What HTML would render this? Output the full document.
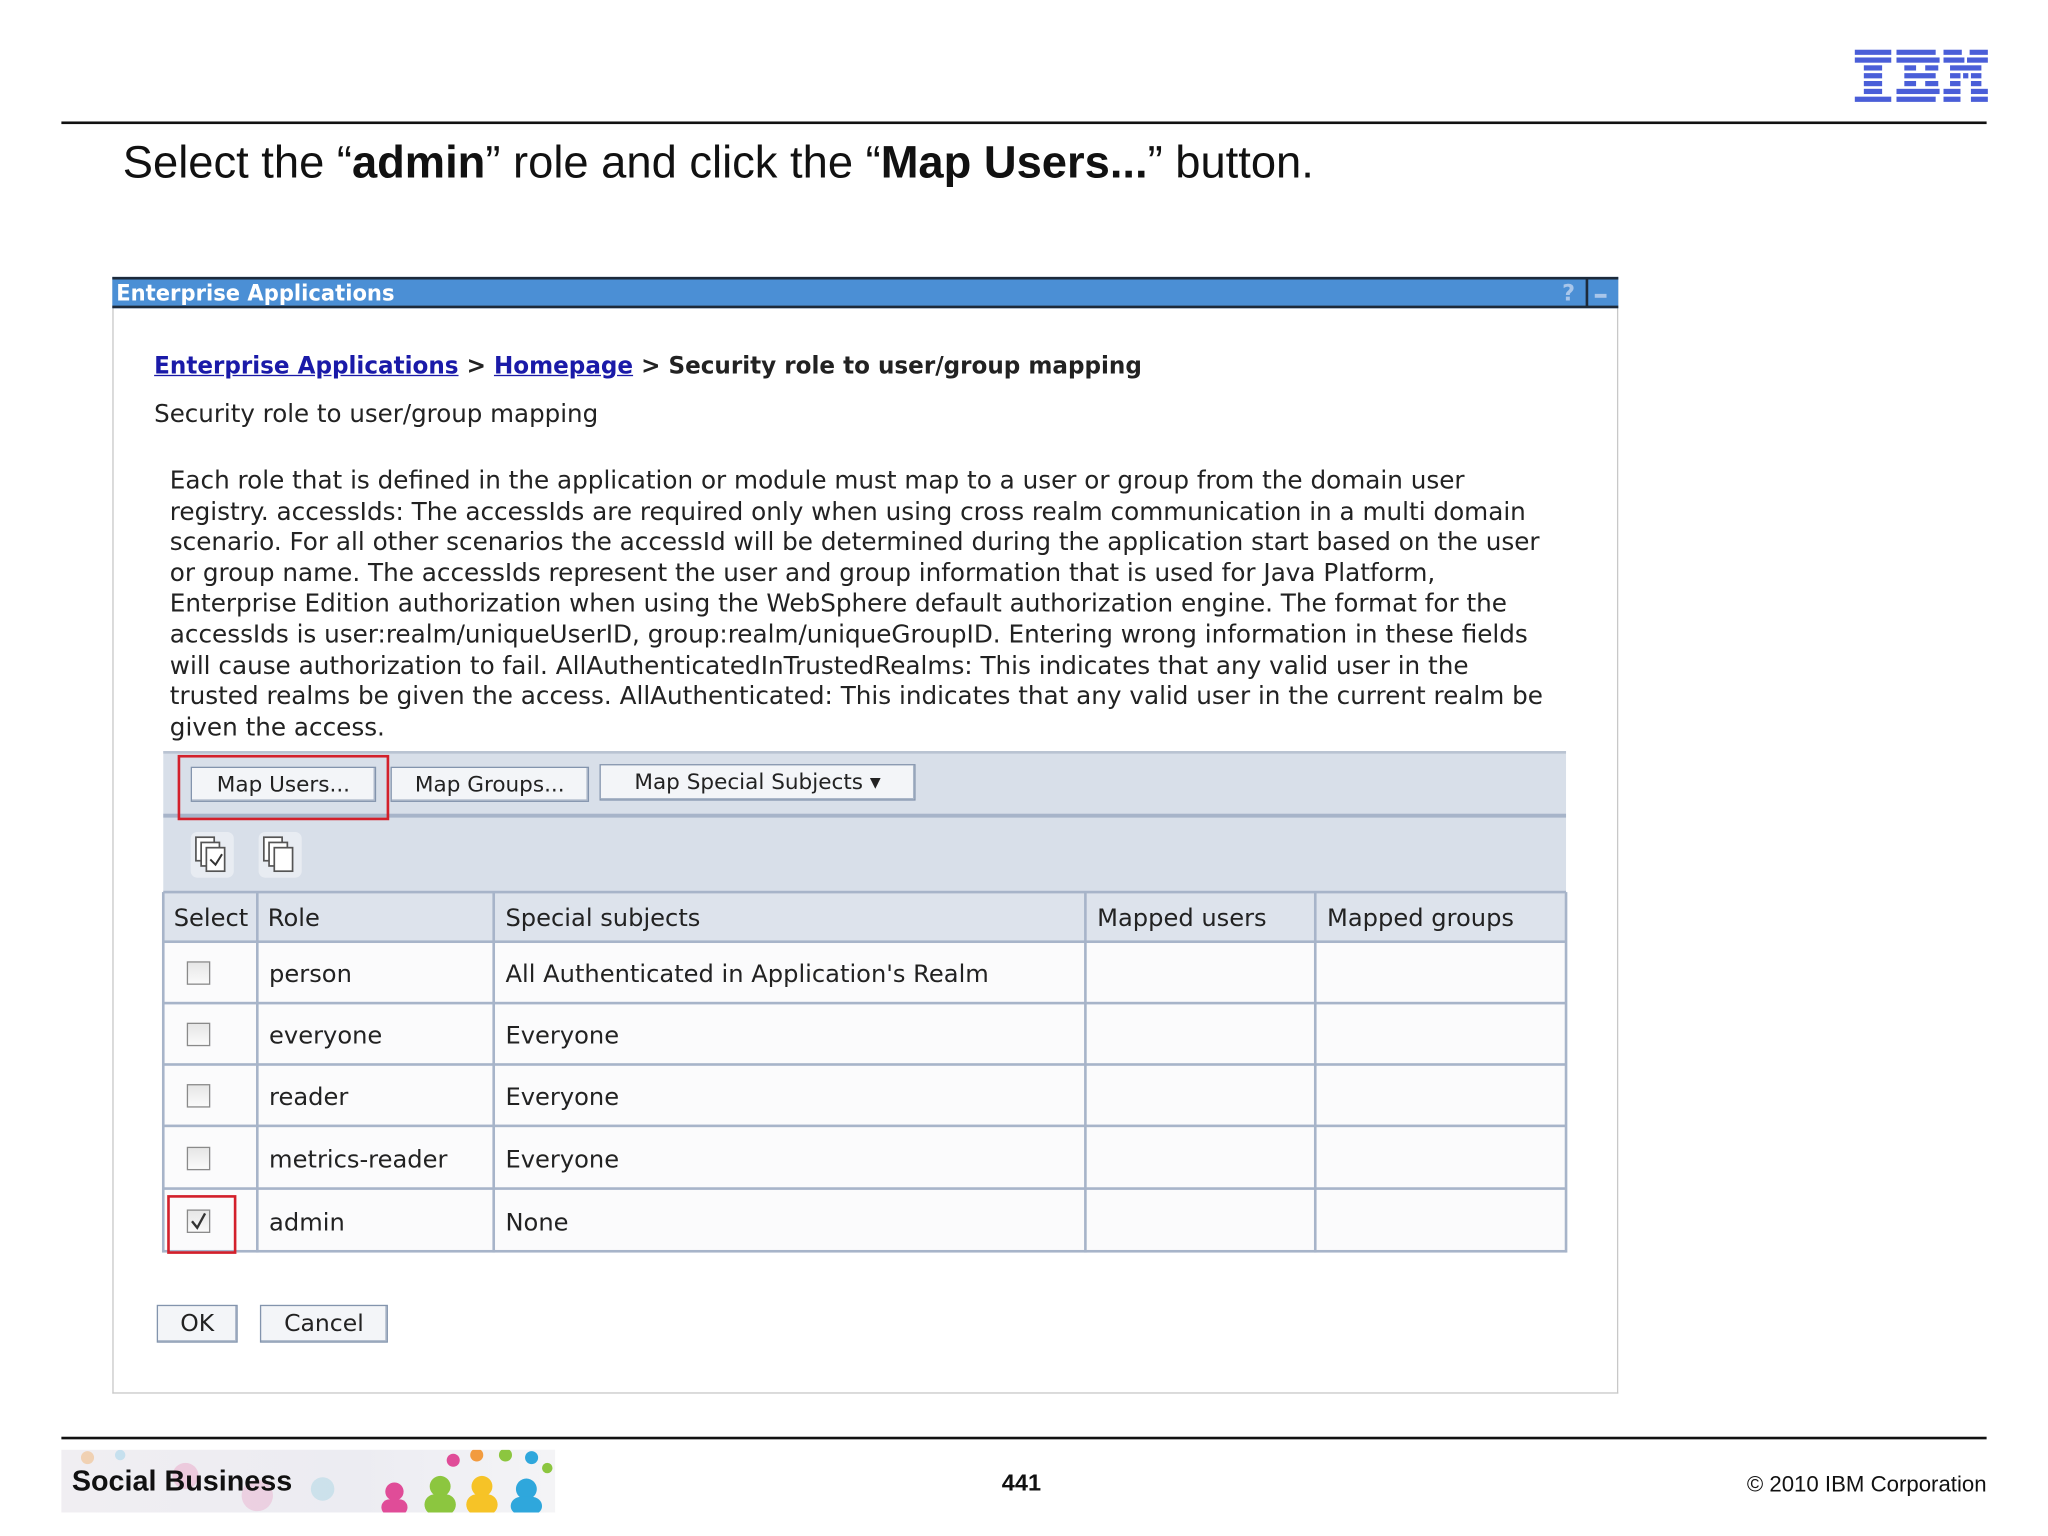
<!DOCTYPE html>
<html><head><meta charset="utf-8"><style>
html,body{margin:0;padding:0;background:#fff;width:2048px;height:1536px;overflow:hidden}
#w{position:absolute;left:0;top:0;width:1568px;height:1176px;transform:scale(1.30612);transform-origin:0 0;font-family:"DejaVu Sans","Liberation Sans",sans-serif;color:#222}
.a{position:absolute;white-space:nowrap}
.btn{position:absolute;background:#f3f5f8;border:1px solid #8394ad;box-shadow:inset -1px -1px 0 #aab6c8;font-size:16.5px;text-align:center;color:#222}
.cb{position:absolute;width:16px;height:16px;border:1px solid #8a8a8a;background:linear-gradient(#e6e6e6,#fafafa)}
.vl{position:absolute;width:2px;background:#a7b4c9}
.hl{position:absolute;height:2px;background:#a7b4c9;left:125px;width:1074px}
.t{position:absolute;font-size:18.5px;white-space:nowrap}
</style></head><body><div id="w">
<svg class="a" style="left:1420px;top:38px" width="102" height="43" viewBox="0 0 102 43">
<g fill="#4a5ed8">
<rect x="0" y="0" width="28" height="4"/><rect x="0" y="6" width="28" height="4"/><rect x="7" y="12" width="14" height="4"/><rect x="7" y="18" width="14" height="4"/><rect x="7" y="24" width="14" height="4"/><rect x="7" y="30" width="14" height="4"/><rect x="0" y="36" width="28" height="4"/>
<rect x="32" y="0" width="30" height="4"/><rect x="32" y="6" width="33" height="4"/><rect x="38" y="12" width="9" height="4"/><rect x="54" y="12" width="10" height="4"/><rect x="38" y="18" width="24" height="4"/><rect x="38" y="24" width="9" height="4"/><rect x="54" y="24" width="10" height="4"/><rect x="32" y="30" width="33" height="4"/><rect x="32" y="36" width="30" height="4"/>
<rect x="68" y="0" width="14" height="4"/><rect x="88" y="0" width="14" height="4"/><rect x="68" y="6" width="16" height="4"/><rect x="86" y="6" width="16" height="4"/><rect x="73" y="12" width="24" height="4"/><rect x="73" y="18" width="8" height="4"/><rect x="83" y="18" width="4" height="4"/><rect x="89" y="18" width="8" height="4"/><rect x="73" y="24" width="8" height="4"/><rect x="89" y="24" width="8" height="4"/><rect x="68" y="30" width="13" height="4"/><rect x="89" y="30" width="13" height="4"/><rect x="68" y="36" width="13" height="4"/><rect x="89" y="36" width="13" height="4"/>
</g></svg>
<div class="a" style="left:47px;top:93px;width:1474px;height:2px;background:#111"></div>
<div class="a" style="left:94px;top:106px;font-family:'Liberation Sans',sans-serif;font-size:34.7px;color:#111">Select the “<b>admin</b>” role and click the “<b>Map Users...</b>” button.</div>

<div class="a" style="left:86px;top:212px;width:1151px;height:854px;border:1px solid #c8c8c8;border-top:none"></div>
<div class="a" style="left:86px;top:212px;width:1153px;height:24px;background:#4b8fd5;border-top:2px solid #1d2a3a;border-bottom:2px solid #1d2a3a;box-sizing:border-box"></div>
<div class="a" style="left:89px;top:214px;font-size:17px;font-weight:bold;color:#fff;line-height:23px;transform:scaleX(0.95);transform-origin:0 0">Enterprise Applications</div>
<div class="a" style="left:1196px;top:214px;font-size:17px;font-weight:bold;color:#a9c6ea;line-height:23px">?</div>
<div class="a" style="left:1214px;top:214px;width:2px;height:21px;background:#1d2a3a"></div>
<div class="a" style="left:1221px;top:225px;width:9px;height:3px;background:#a9c6ea"></div>

<div class="a" style="left:118px;top:270px;font-size:18.5px;font-weight:bold;color:#222;transform:scaleX(0.955);transform-origin:0 0"><span style="color:#1a1aa8;text-decoration:underline">Enterprise Applications</span> &gt; <span style="color:#1a1aa8;text-decoration:underline">Homepage</span> &gt; Security role to user/group mapping</div>
<div class="a" style="left:118px;top:307px;font-size:18.8px">Security role to user/group mapping</div>
<div class="a" style="left:130px;top:357px;font-size:18.9px;line-height:23.6px">Each role that is defined in the application or module must map to a user or group from the domain user<br>registry. accessIds: The accessIds are required only when using cross realm communication in a multi domain<br>scenario. For all other scenarios the accessId will be determined during the application start based on the user<br>or group name. The accessIds represent the user and group information that is used for Java Platform,<br>Enterprise Edition authorization when using the WebSphere default authorization engine. The format for the<br>accessIds is user:realm/uniqueUserID, group:realm/uniqueGroupID. Entering wrong information in these fields<br>will cause authorization to fail. AllAuthenticatedInTrustedRealms: This indicates that any valid user in the<br>trusted realms be given the access. AllAuthenticated: This indicates that any valid user in the current realm be<br>given the access.</div>

<div class="a" style="left:125px;top:575px;width:1074px;height:108px;background:#d8dfe9;border-top:2px solid #b9c3d2"></div>
<div class="a" style="left:125px;top:623px;width:1074px;height:3px;background:#a7b4c9"></div>
<div class="btn" style="left:146px;top:587px;width:140px;height:25px;line-height:25px">Map Users...</div>
<div class="btn" style="left:299px;top:587px;width:150px;height:25px;line-height:25px">Map Groups...</div>
<div class="btn" style="left:459px;top:585px;width:240px;height:26px;line-height:26px">Map Special Subjects ▾</div>
<div class="a" style="left:136px;top:578px;width:158px;height:46px;border:2px solid #d3202b"></div>
<svg class="a" style="left:145px;top:636px" width="90" height="38">
<rect x="1" y="1" width="33" height="35" rx="5" fill="#e8ecf2"/><rect x="53" y="1" width="33" height="35" rx="5" fill="#e8ecf2"/>
<g fill="#fff" stroke="#555" stroke-width="1.3"><rect x="5" y="5" width="14" height="18"/><rect x="9" y="9" width="14" height="18"/><rect x="13" y="13" width="14" height="18"/>
<rect x="57" y="5" width="14" height="18"/><rect x="61" y="9" width="14" height="18"/><rect x="65" y="13" width="14" height="18"/></g>
<path d="M16 22l4 4 5-8" fill="none" stroke="#333" stroke-width="1.5"/></svg>

<div class="a" style="left:125px;top:683px;width:1074px;height:38px;background:#dde3ec"></div>
<div class="a" style="left:125px;top:721px;width:1074px;height:237px;background:#fbfbfc"></div>
<div class="hl" style="top:682px"></div><div class="hl" style="top:720px"></div><div class="hl" style="top:767px"></div><div class="hl" style="top:814px"></div><div class="hl" style="top:861px"></div><div class="hl" style="top:909px"></div><div class="hl" style="top:957px"></div>
<div class="vl" style="left:124px;top:683px;height:276px"></div><div class="vl" style="left:196px;top:683px;height:276px"></div><div class="vl" style="left:377px;top:683px;height:276px"></div><div class="vl" style="left:830px;top:683px;height:276px"></div><div class="vl" style="left:1006px;top:683px;height:276px"></div><div class="vl" style="left:1198px;top:683px;height:276px"></div>
<div class="t" style="left:133px;top:693px">Select</div><div class="t" style="left:205px;top:693px">Role</div><div class="t" style="left:387px;top:693px">Special subjects</div><div class="t" style="left:840px;top:693px">Mapped users</div><div class="t" style="left:1016px;top:693px">Mapped groups</div>
<div class="cb" style="left:143px;top:736px"></div><div class="t" style="left:206px;top:736px">person</div><div class="t" style="left:387px;top:736px">All Authenticated in Application's Realm</div>
<div class="cb" style="left:143px;top:783px"></div><div class="t" style="left:206px;top:783px">everyone</div><div class="t" style="left:387px;top:783px">Everyone</div>
<div class="cb" style="left:143px;top:830px"></div><div class="t" style="left:206px;top:830px">reader</div><div class="t" style="left:387px;top:830px">Everyone</div>
<div class="cb" style="left:143px;top:878px"></div><div class="t" style="left:206px;top:878px">metrics-reader</div><div class="t" style="left:387px;top:878px">Everyone</div>
<div class="cb" style="left:143px;top:926px"></div><svg class="a" style="left:143px;top:926px" width="18" height="18"><path d="M4 9l4 5 6-11" fill="none" stroke="#333" stroke-width="1.8"/></svg>
<div class="t" style="left:206px;top:926px">admin</div><div class="t" style="left:387px;top:926px">None</div>
<div class="a" style="left:128px;top:915px;width:49px;height:41px;border:2px solid #d3202b"></div>

<div class="btn" style="left:120px;top:999px;width:60px;height:27px;line-height:27px;font-size:18px">OK</div>
<div class="btn" style="left:199px;top:999px;width:96px;height:27px;line-height:27px;font-size:18px">Cancel</div>

<div class="a" style="left:47px;top:1100px;width:1474px;height:2px;background:#111"></div>
<div class="a" style="left:47px;top:1110px;width:378px;height:48px;background:linear-gradient(90deg,#f0eef2,#ececf2 60%,#f4f4f6);overflow:hidden">
<svg width="378" height="48"><g opacity="0.35"><circle cx="95" cy="20" r="10" fill="#e78ab7"/><circle cx="150" cy="35" r="12" fill="#e89bc3"/><circle cx="200" cy="30" r="9" fill="#8fcde0"/><circle cx="20" cy="6" r="5" fill="#f29b3f"/><circle cx="45" cy="4" r="4" fill="#7cc6e8"/></g>
<g><circle cx="255" cy="32" r="7" fill="#e04c98"/><rect x="245" y="38" width="20" height="12" rx="6" fill="#e04c98"/><circle cx="290" cy="28" r="8" fill="#8cc63f"/><rect x="278" y="34" width="24" height="16" rx="8" fill="#8cc63f"/><circle cx="322" cy="28" r="8" fill="#f6c327"/><rect x="310" y="34" width="24" height="16" rx="8" fill="#f6c327"/><circle cx="356" cy="30" r="8" fill="#2fa7dc"/><rect x="344" y="36" width="24" height="14" rx="8" fill="#2fa7dc"/>
<circle cx="300" cy="8" r="5" fill="#e04c98"/><circle cx="318" cy="4" r="5" fill="#f29b3f"/><circle cx="340" cy="4" r="5" fill="#8cc63f"/><circle cx="360" cy="6" r="5" fill="#2fa7dc"/><circle cx="372" cy="14" r="4" fill="#8cc63f"/></g></svg>
</div>
<div class="a" style="left:55px;top:1121px;font-family:'Liberation Sans',sans-serif;font-weight:bold;font-size:22px;color:#111">Social Business</div>
<div class="a" style="left:767px;top:1125px;font-family:'Liberation Sans',sans-serif;font-weight:bold;font-size:18px;color:#111">441</div>
<div class="a" style="right:47px;top:1127px;font-family:'Liberation Sans',sans-serif;font-size:17px;color:#111">© 2010 IBM Corporation</div>
</div></body></html>
